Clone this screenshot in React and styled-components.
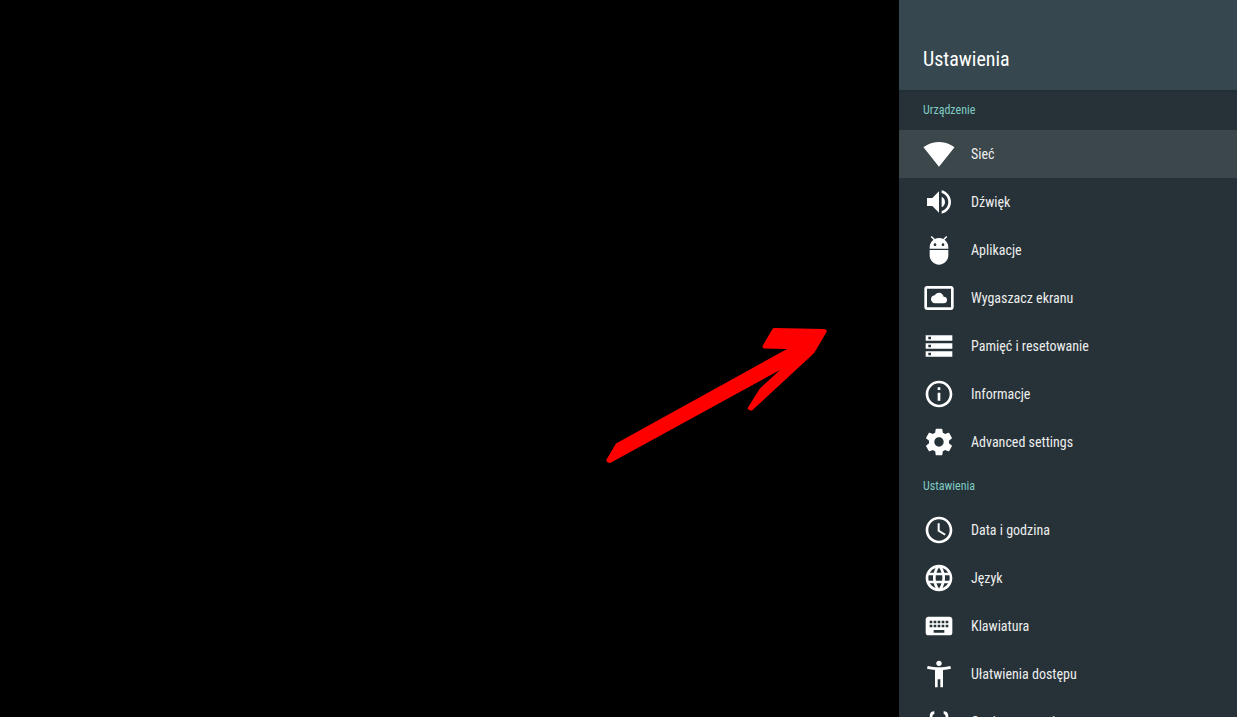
import React from "react";
import styled, { createGlobalStyle } from "styled-components";
import {
  MdAccessTime,
  MdAdb,
  MdInfoOutline,
  MdKeyboard,
  MdLanguage,
  MdSettingsSystemDaydream,
  MdSignalWifi4Bar,
  MdStorage,
  MdVolumeUp,
} from "react-icons/md";

const GlobalStyle = createGlobalStyle`
  * { box-sizing: border-box; }
  body {
    margin: 0;
    background: #000;
    font-family: "Roboto Condensed", "Liberation Sans Narrow", Roboto, sans-serif;
  }
`;

const Screen = styled.div`
  display: flex;
  height: 100vh;
  overflow: hidden;
`;

const Stage = styled.main`
  position: relative;
  flex: 1;
  min-width: 0;
  background: #000;
`;

const Arrow = styled.svg`
  position: absolute;
  top: 328px;
  right: 72px;
  width: 221px;
  height: 135px;
  fill: #f00;
`;

const Panel = styled.aside`
  display: flex;
  flex-direction: column;
  flex: 0 0 338px;
  background: #263238;
  color: #fff;
`;

const Header = styled.header`
  position: relative;
  flex: none;
  padding: 44px 24px 16px;
  background: #37474f;
  box-shadow: 0 1px 2px rgba(0, 0, 0, 0.15);
`;

const Title = styled.h1`
  margin: 0;
  font-size: 20px;
  font-weight: 400;
  line-height: 30px;
`;

const List = styled.nav`
  flex: 1;
  min-height: 0;
  overflow-y: auto;
  scrollbar-width: none;
`;

const GroupTitle = styled.h2`
  margin: 0;
  padding: 0 24px;
  color: #80cbc4;
  font-size: 12px;
  font-weight: 400;
  line-height: 40px;
`;

const Items = styled.ul`
  margin: 0;
  padding: 0;
  list-style: none;
`;

const Item = styled.button`
  display: flex;
  align-items: center;
  gap: 16px;
  width: 100%;
  height: 48px;
  padding: 0 24px;
  border: 0;
  background: ${(p) => (p.$selected ? "#3c474c" : "transparent")};
  color: #eee;
  font-family: inherit;
  font-size: 14px;
  text-align: left;

  svg {
    flex: none;
    width: 32px;
    height: 32px;
    color: #fff;
  }
`;

const GearIcon = () => (
  <svg viewBox="0 0 24 24" fill="currentColor" aria-hidden="true">
    <path d="M19.43 12.98c.04-.32.07-.64.07-.98s-.03-.66-.07-.98l2.11-1.65c.19-.15.24-.42.12-.64l-2-3.46c-.12-.22-.39-.3-.61-.22l-2.49 1c-.52-.4-1.08-.73-1.69-.98l-.38-2.65C14.46 2.18 14.25 2 14 2h-4c-.25 0-.46.18-.49.42l-.38 2.65c-.61.25-1.17.59-1.69.98l-2.49-1c-.23-.09-.49 0-.61.22l-2 3.46c-.13.22-.07.49.12.64l2.11 1.65c-.04.32-.07.65-.07.98s.03.66.07.98l-2.11 1.65c-.19.15-.24.42-.12.64l2 3.46c.12.22.39.3.61.22l2.49-1c.52.4 1.08.73 1.69.98l.38 2.65c.03.24.24.42.49.42h4c.25 0 .46-.18.49-.42l.38-2.65c.61-.25 1.17-.59 1.69-.98l2.49 1c.23.09.49 0 .61-.22l2-3.46c.12-.22.07-.49-.12-.64l-2.11-1.65zM12 15.5c-1.93 0-3.5-1.57-3.5-3.5s1.57-3.5 3.5-3.5 3.5 1.57 3.5 3.5-1.57 3.5-3.5 3.5z" />
  </svg>
);

const PersonIcon = () => (
  <svg viewBox="0 0 24 24" fill="currentColor" aria-hidden="true">
    <circle cx="12" cy="4" r="2" />
    <path d="M20.500 6c-2.610.7-5.670 1-8.500 1s-5.890-.3-8.500-1L3 8c1.860.5 4 .83 6 1v13h2v-6h2v6h2V9c2-.17 4.140-.5 6-1z" />
  </svg>
);

const BracesIcon = () => (
  <svg
    viewBox="0 0 24 24"
    fill="none"
    stroke="currentColor"
    strokeWidth="2"
    aria-hidden="true"
  >
    <path d="M8.500 5q-2.500 0-2.500 3v2q0 2-2 2 2 0 2 2v2q0 3 2.500 3M15.500 5q2.500 0 2.500 3v2q0 2 2 2-2 0-2 2v2q0 3-2.500 3" />
  </svg>
);

const groups = [
  {
    title: "Urządzenie",
    items: [
      { label: "Sieć", icon: MdSignalWifi4Bar, selected: true },
      { label: "Dźwięk", icon: MdVolumeUp },
      { label: "Aplikacje", icon: MdAdb },
      { label: "Wygaszacz ekranu", icon: MdSettingsSystemDaydream },
      { label: "Pamięć i resetowanie", icon: MdStorage },
      { label: "Informacje", icon: MdInfoOutline },
      { label: "Advanced settings", icon: GearIcon },
    ],
  },
  {
    title: "Ustawienia",
    items: [
      { label: "Data i godzina", icon: MdAccessTime },
      { label: "Język", icon: MdLanguage },
      { label: "Klawiatura", icon: MdKeyboard },
      { label: "Ułatwienia dostępu", icon: PersonIcon },
      { label: "Opcje programisty", icon: BracesIcon },
    ],
  },
];

export default function App() {
  return (
    <>
      <GlobalStyle />
      <Screen>
        <Stage>
          <Arrow viewBox="0 0 221 135" aria-hidden="true">
            <path d="M10 115.500L181 21L158 20.500Q156 20 156.500 18L166.500 1Q167 0 169 0L218 1Q222 1.500 220.500 4L210 22Q208.500 25 205 28L146.500 82Q145 83 143.500 82Q141 81.500 142 79.500L151 65Q153 61 156 58.500L174 42L6 134Q4 135.500 2 134.500Q-0.500 133.500 0.500 131.500Z" />
          </Arrow>
        </Stage>
        <Panel>
          <Header>
            <Title>Ustawienia</Title>
          </Header>
          <List aria-label="Ustawienia">
            {groups.map((group) => (
              <section key={group.title}>
                <GroupTitle>{group.title}</GroupTitle>
                <Items>
                  {group.items.map(({ label, icon: Icon, selected }) => (
                    <li key={label}>
                      <Item
                        type="button"
                        $selected={selected}
                        aria-current={selected ? "true" : undefined}
                      >
                        <Icon />
                        {label}
                      </Item>
                    </li>
                  ))}
                </Items>
              </section>
            ))}
          </List>
        </Panel>
      </Screen>
    </>
  );
}
